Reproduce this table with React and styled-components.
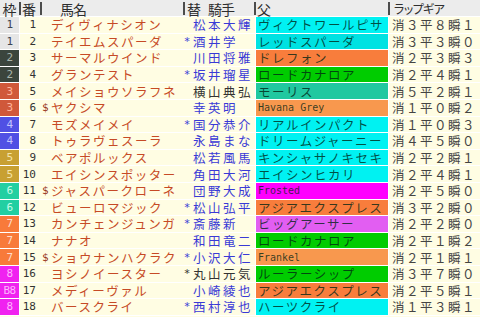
import React from "react";
import styled, { createGlobalStyle } from "styled-components";

const Global = createGlobalStyle`
  html, body { margin: 0; padding: 0; background: #fffde3; }
  body { font-family: "Noto Sans CJK JP", sans-serif; }
`;

const WAKU = {
  1: { bg: "#e6e6e6", fg: "#3c4450" },
  2: { bg: "#3b453d", fg: "#aab4aa" },
  3: { bg: "#d0583a", fg: "#ffb49a" },
  4: { bg: "#5050e4", fg: "#c4c4ff" },
  5: { bg: "#c8a032", fg: "#f4e4a8" },
  6: { bg: "#22cfa2", fg: "#c4fce8" },
  7: { bg: "#f87a3a", fg: "#ffdcc8" },
  8: { bg: "#f022f0", fg: "#ffb4ff" },
};

const SIRE = {
  cyan: "#00f2f2",
  cyan2: "#00e2e2",
  orange: "#f87d3c",
  lorange: "#f8984e",
  green: "#00cc00",
  teal: "#20c8a0",
  magenta: "#ff00ff",
  violet: "#e25ef2",
};

const rows = [
  [1, "1", 1, "", "ディヴィナシオン", "", "松本大輝", false, "ヴィクトワールピサ", "cyan", "消３平８瞬１"],
  [1, "1", 2, "", "テイエムスパーダ", "*", "酒井学", false, "レッドスパーダ", "cyan2", "消３平３瞬０"],
  [2, "2", 3, "", "サーマルウインド", "", "川田将雅", false, "ドレフォン", "orange", "消２平３瞬３"],
  [2, "2", 4, "", "グランテスト", "*", "坂井瑠星", false, "ロードカナロア", "green", "消２平４瞬１"],
  [3, "3", 5, "", "メイショウソラフネ", "", "横山典弘", true, "モーリス", "teal", "消５平２瞬１"],
  [3, "3", 6, "$", "ヤクシマ", "", "幸英明", false, "Havana Grey", "lorange", "消１平０瞬２"],
  [4, "4", 7, "", "モズメイメイ", "*", "国分恭介", false, "リアルインパクト", "cyan", "消１平０瞬３"],
  [4, "4", 8, "", "トゥラヴェスーラ", "", "永島まな", false, "ドリームジャーニー", "cyan", "消４平５瞬０"],
  [5, "5", 9, "", "ベアポルックス", "", "松若風馬", false, "キンシャサノキセキ", "cyan", "消２平２瞬１"],
  [5, "5", 10, "", "エイシンスポッター", "", "角田大河", false, "エイシンヒカリ", "cyan", "消２平４瞬１"],
  [6, "6", 11, "$", "ジャスパークローネ", "", "団野大成", false, "Frosted", "magenta", "消２平５瞬０"],
  [6, "6", 12, "", "ビューロマジック", "*", "松山弘平", false, "アジアエクスプレス", "orange", "消３平２瞬０"],
  [7, "7", 13, "", "カンチェンジュンガ", "*", "斎藤新", false, "ビッグアーサー", "violet", "消２平２瞬０"],
  [7, "7", 14, "", "ナナオ", "", "和田竜二", false, "ロードカナロア", "green", "消２平１瞬２"],
  [7, "7", 15, "$", "ショウナンハクラク", "*", "小沢大仁", false, "Frankel", "lorange", "消２平１瞬１"],
  [8, "8", 16, "", "ヨシノイースター", "*", "丸山元気", true, "ルーラーシップ", "green", "消３平７瞬０"],
  [8, "B8", 17, "", "メディーヴァル", "", "小崎綾也", false, "アジアエクスプレス", "orange", "消２平５瞬１"],
  [8, "8", 18, "", "バースクライ", "*", "西村淳也", false, "ハーツクライ", "cyan", "消１平３瞬１"],
];

const Table = styled.div`
  width: 480px;
  display: flex;
  flex-direction: column;
`;

const HeaderRow = styled.div`
  display: grid;
  grid-template-columns: 19px 21px 143px 71px 134px 92px;
  height: 16px;
  background: #ececec;
  border-bottom: 1px solid #ffffff;
  color: #2e2e2e;
  font-size: 14px;
  line-height: 14px;
`;

const HeaderCell = styled.div`
  display: flex;
  align-items: center;
  justify-content: ${(p) => (p.$center ? "center" : "flex-start")};
  height: 13px;
  margin-top: 2px;
  padding-left: ${(p) => p.$pad || 0}px;
  border-left: ${(p) => (p.$bar ? "2px solid #4c4c4c" : "none")};
  gap: ${(p) => p.$gap || 0}px;
  font-size: ${(p) => p.$size || 14}px;
  letter-spacing: ${(p) => p.$ls || 0}px;
  font-feature-settings: ${(p) => (p.$palt ? '"palt"' : "normal")};
  white-space: nowrap;
`;

const Row = styled.div`
  display: grid;
  grid-template-columns: 19px 21px 142px 10px 63px 134px 91px;
  height: 16.6px;
  box-sizing: border-box;
  border-bottom: 1px solid #ffffff;
  align-items: stretch;
  line-height: 15px;
`;

const Cell = styled.div`
  display: flex;
  align-items: center;
  white-space: nowrap;
  min-width: 0;
`;

const WakuCell = styled(Cell)`
  justify-content: center;
  background: ${(p) => p.$bg};
  color: ${(p) => p.$fg};
  font-family: "DejaVu Sans Mono", monospace;
  font-size: 11px;
  letter-spacing: -0.5px;
`;

const NumCell = styled(Cell)`
  justify-content: flex-end;
  border-left: 1px solid #ffffff;
  padding-right: 4px;
  color: #333333;
  font-family: "DejaVu Sans Mono", monospace;
  font-size: 11px;
`;

const NameCell = styled(Cell)`
  padding-left: 2px;
  color: #c64a26;
  font-size: 12.5px;
  letter-spacing: 1.5px;
`;

const Mark = styled.span`
  display: inline-block;
  width: 9px;
  font-family: "DejaVu Sans Mono", monospace;
  font-size: 11px;
  letter-spacing: 0;
  color: #9a3a24;
`;

const ChangeCell = styled(Cell)`
  justify-content: center;
  font-family: "DejaVu Sans Mono", monospace;
  font-size: 11px;
  color: ${(p) => (p.$dark ? "#333333" : "#3a3ad6")};
`;

const JockeyCell = styled(Cell)`
  padding-left: 1px;
  font-size: 12.5px;
  letter-spacing: 2.5px;
  color: ${(p) => (p.$dark ? "#333333" : "#3a3ad6")};
`;

const SireCell = styled(Cell)`
  background: ${(p) => p.$bg};
  border-left: 1px solid #ffffff;
  border-right: 1px solid #ffffff;
  padding-left: 2px;
  color: rgba(0, 36, 20, 0.78);
  font-family: ${(p) =>
    p.$latin ? '"DejaVu Sans Mono", monospace' : '"Noto Sans CJK JP", sans-serif'};
  font-size: ${(p) => (p.$latin ? 10 : 12.5)}px;
  letter-spacing: ${(p) => (p.$latin ? 0 : 1.5)}px;
`;

const LapCell = styled(Cell)`
  padding-left: 3px;
  color: #444444;
  font-size: 12.5px;
  letter-spacing: 1.5px;
`;

export default function App() {
  return (
    <>
      <Global />
      <Table>
        <HeaderRow>
          <HeaderCell $center>枠</HeaderCell>
          <HeaderCell $bar $pad={1}>番</HeaderCell>
          <HeaderCell $bar $pad={18} $ls={-1}>馬名</HeaderCell>
          <HeaderCell $bar $pad={2} $gap={8} $ls={-1}>
            <span>替</span>
            <span>騎手</span>
          </HeaderCell>
          <HeaderCell $bar $pad={1}>父</HeaderCell>
          <HeaderCell $bar $pad={4} $size={12} $palt $ls={-0.6}>ラップギア</HeaderCell>
        </HeaderRow>
        {rows.map((r) => {
          const [waku, wakuLabel, num, mark, name, chg, jockey, dark, sire, sireColor, lap] = r;
          const w = WAKU[waku];
          return (
            <Row key={num}>
              <WakuCell $bg={w.bg} $fg={w.fg}>{wakuLabel}</WakuCell>
              <NumCell>{num}</NumCell>
              <NameCell>
                <Mark>{mark}</Mark>
                {name}
              </NameCell>
              <ChangeCell $dark={dark}>{chg}</ChangeCell>
              <JockeyCell $dark={dark}>{jockey}</JockeyCell>
              <SireCell $bg={SIRE[sireColor]} $latin={/^[A-Za-z ]+$/.test(sire)}>
                {sire}
              </SireCell>
              <LapCell>{lap}</LapCell>
            </Row>
          );
        })}
      </Table>
    </>
  );
}
